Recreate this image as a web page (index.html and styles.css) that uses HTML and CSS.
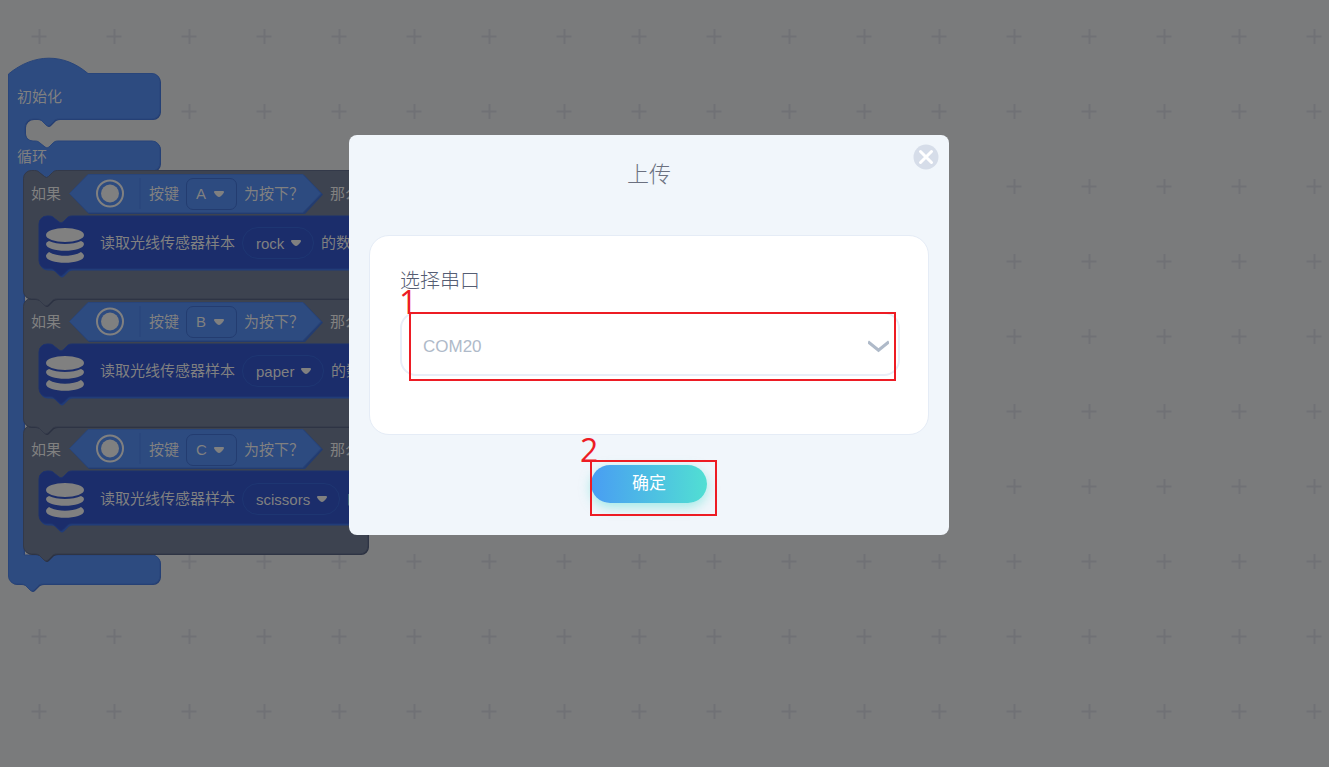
FILE: index.html
```html
<!DOCTYPE html>
<html lang="zh-CN">
<head>
<meta charset="utf-8">
<title>上传</title>
<link rel="stylesheet" href="styles.css">
</head>
<body>
<main class="workspace">
  <svg class="canvas" aria-hidden="true">
    <defs>
      <pattern id="grid" x="2" y="-1" width="75" height="75" patternUnits="userSpaceOnUse">
        <path d="M29.500 37.500h15M37.500 30v15" stroke="#707175" stroke-width="2" fill="none"/>
      </pattern>
      <path id="loop" d="M8.500 74C34 53 64 53 88 73.500H152a8 8 0 0 1 8 8V111a8 8 0 0 1-8 8H59c-3 0-4 1-5 2l-4 4q-2 2-4 0l-4-4c-1-1-2-2-5-2h-4a8 8 0 0 0-8 8v6a8 8 0 0 0 8 8h2c3 0 4 1 5 2l5 4q2 2 4 0l4-4c1-1 2-2 5-2H152a8 8 0 0 1 8 8V163a8 8 0 0 1-8 8H60l-8 10H40l-8-4H24V555H152a8 8 0 0 1 8 8v13a8 8 0 0 1-8 8H43c-3 0-4 1-5 2l-4 4q-2 2-4 0l-4-4c-1-1-2-2-5-2h-4.500a8 8 0 0 1-8-8z"/>
      <path id="branch" d="M23.500 178.500a8 8 0 0 1 8-8h3c3 0 4 1 5 2l5 4q2 2 4 0l4-4c1-1 2-2 5-2H360a8 8 0 0 1 8 8V291a8 8 0 0 1-8 8H57c-3 0-4 1-5 2l-4 4q-2 2-4 0l-4-4c-1-1-2-2-5-2h-3.500a8 8 0 0 1-8-8z"/>
      <path id="store" d="M39 224a8 8 0 0 1 8-8h2c3 0 4 1 5 2l5 4q2 2 4 0l4-4c1-1 2-2 5-2H368V268.500H72c-3 0-4 1-5 2l-4 4q-2 2-4 0l-4-4c-1-1-2-2-5-2h-3a8 8 0 0 1-8-8z"/>
      <g id="group">
        <use href="#branch" x="1" y="1" class="branch-edge"/>
        <use href="#branch" class="branch"/>
        <path class="loop-edge" d="M70 194l19-19H304l19 19.500L305 214H89z"/>
        <path class="loop" d="M69.500 193.500L88 174.500H303L321 193.500L303 212.500H88z"/>
        <circle cx="110" cy="193.500" r="13" fill="none" stroke="#808080" stroke-width="2"/>
        <circle cx="110" cy="193.500" r="9" fill="#808080"/>
        <path d="M140 178v31" stroke="#29457a"/>
        <use href="#store" x="1" y="2" class="store-edge"/>
        <use href="#store" class="store"/>
        <g fill="#808080">
          <ellipse cx="65" cy="235" rx="19" ry="7"/>
          <path d="M46 244q0-2 3-3c8 4 24 4 32 0q3 1 3 3c0 9-38 9-38 0z"/>
          <path d="M46 256q0-2 3-4c8 5 24 5 32 0q3 2 3 4c0 9-38 9-38 0z"/>
        </g>
      </g>
    </defs>
    <rect width="100%" height="100%" fill="url(#grid)"/>
    <use href="#loop" x="1" y="1" class="loop-edge"/>
    <use href="#loop" class="loop"/>
    <use href="#group" y="255"/>
    <use href="#group" y="128"/>
    <use href="#group"/>
  </svg>

  <section class="script">
    <p class="stage stage-init">初始化</p>
    <p class="stage stage-loop">循环</p>
    <div class="group">
      <div class="row cond">
        <span class="if">如果</span>
        <label for="key1">按键</label>
        <span class="pick"><select id="key1"><option>A</option></select><svg viewBox="0 0 10 6"><path d="M1 0h8q1 0 1 1 0 1-3 4-2 2-4 0Q0 2 0 1 0 0 1 0z"/></svg></span>
        <span class="pressed">为按下<span class="query">？</span></span><span>那么</span>
      </div>
      <div class="row read">
        <label for="set1">读取光线传感器样本</label>
        <span class="pick round"><select id="set1"><option>rock</option></select><svg viewBox="0 0 10 6"><path d="M1 0h8q1 0 1 1 0 1-3 4-2 2-4 0Q0 2 0 1 0 0 1 0z"/></svg></span>
        <span>的数</span>
      </div>
    </div>
    <div class="group">
      <div class="row cond">
        <span class="if">如果</span>
        <label for="key2">按键</label>
        <span class="pick"><select id="key2"><option>B</option></select><svg viewBox="0 0 10 6"><path d="M1 0h8q1 0 1 1 0 1-3 4-2 2-4 0Q0 2 0 1 0 0 1 0z"/></svg></span>
        <span class="pressed">为按下<span class="query">？</span></span><span>那么</span>
      </div>
      <div class="row read">
        <label for="set2">读取光线传感器样本</label>
        <span class="pick round"><select id="set2"><option>paper</option></select><svg viewBox="0 0 10 6"><path d="M1 0h8q1 0 1 1 0 1-3 4-2 2-4 0Q0 2 0 1 0 0 1 0z"/></svg></span>
        <span>的数</span>
      </div>
    </div>
    <div class="group">
      <div class="row cond">
        <span class="if">如果</span>
        <label for="key3">按键</label>
        <span class="pick"><select id="key3"><option>C</option></select><svg viewBox="0 0 10 6"><path d="M1 0h8q1 0 1 1 0 1-3 4-2 2-4 0Q0 2 0 1 0 0 1 0z"/></svg></span>
        <span class="pressed">为按下<span class="query">？</span></span><span>那么</span>
      </div>
      <div class="row read">
        <label for="set3">读取光线传感器样本</label>
        <span class="pick round"><select id="set3"><option>scissors</option></select><svg viewBox="0 0 10 6"><path d="M1 0h8q1 0 1 1 0 1-3 4-2 2-4 0Q0 2 0 1 0 0 1 0z"/></svg></span>
        <span>的</span>
      </div>
    </div>
  </section>
</main>

<div class="overlay">
  <div class="dialog" role="dialog" aria-labelledby="title">
    <h1 class="title" id="title">上传</h1>
    <button class="close" type="button" aria-label="关闭">
      <svg viewBox="0 0 26 26"><circle cx="13" cy="13" r="12.500" fill="#d6dde9"/><path d="M7.500 7.500l11 11M18.500 7.500l-11 11" stroke="#fff" stroke-width="3" stroke-linecap="round"/></svg>
    </button>
    <div class="card">
      <label class="port-label" for="port">选择串口</label>
      <div class="port">
        <select id="port"><option>COM20</option></select>
        <svg viewBox="0 0 20 12"><path d="M0 1.500l10 8 10-8" fill="none" stroke="#afbac9" stroke-width="3"/></svg>
      </div>
    </div>
    <button class="confirm" type="button">确定</button>
    <div class="mark mark-port"><span>1</span></div>
    <div class="mark mark-confirm"><span>2</span></div>
  </div>
</div>
</body>
</html>
```
FILE: styles.css
```css
* { box-sizing: border-box; }

body {
  margin: 0;
  min-height: 100vh;
  background: #7a7b7c;
  font-family: "Liberation Sans", "Noto Sans CJK SC", sans-serif;
}

button, select { font-family: inherit; margin: 0; }

select {
  appearance: none;
  background: none;
  border: 0;
  outline: 0;
}

.workspace {
  position: relative;
  height: 100vh;
  overflow: hidden;
  color: #808080;
  font-size: 15px;
  line-height: 24px;
}

.canvas {
  position: absolute;
  inset: 0;
  width: 100%;
  height: 100%;
}

.loop { fill: #2d4b80; stroke: #29457a; }
.loop-edge { fill: #233c70; }
.branch { fill: #3d4350; stroke: #333949; }
.branch-edge { fill: #2b3141; }
.store { fill: #1b2d6b; stroke: #1d326f; }
.store-edge { fill: #213c78; }

/* The program sits on the free canvas, its rows stack from the top */
.script {
  position: absolute;
  left: 8px;
  top: 57px;
  white-space: nowrap;
}

.stage { margin: 0; padding-left: 9px; }
.stage-init { padding-top: 28px; height: 88px; }
.stage-loop { height: 25px; }

.group { height: 128px; }

.row {
  display: flex;
  align-items: center;
  gap: 7px;
}

.cond { height: 47px; padding-left: 23px; }
.read { height: 52px; padding-left: 92px; }
.if { width: 111px; }
.pressed { width: 79px; }
.query { font-family: "Noto Sans CJK JP", sans-serif; }

.pick {
  display: grid;
  align-items: center;
  border: 1px solid #233c70;
  border-radius: 7px;
}

.pick select {
  grid-area: 1 / 1;
  height: 30px;
  padding: 0 29px 0 9px;
  font-size: 15px;
  color: #808080;
}

.pick svg {
  grid-area: 1 / 1;
  justify-self: end;
  width: 10px;
  height: 6px;
  margin-right: 12px;
  fill: #808080;
  pointer-events: none;
}

.pick.round { border-color: #1e3672; border-radius: 16px; }
.pick.round select { padding: 0 28px 0 13px; }

.overlay {
  position: fixed;
  inset: 0;
  display: flex;
  align-items: center;
  justify-content: center;
  padding: 0 31px 97px 0;
}

.dialog {
  position: relative;
  display: flex;
  flex-direction: column;
  align-items: center;
  width: 600px;
  padding: 20px 20px 32px;
  border-radius: 8px;
  background: #f1f6fb;
}

.title {
  margin: 0 0 46px;
  font-size: 22px;
  line-height: 34px;
  font-weight: 300;
  font-family: "Noto Sans CJK SC", sans-serif;
  color: #6b7080;
}

.close {
  position: absolute;
  top: 9px;
  right: 10px;
  width: 26px;
  height: 26px;
  padding: 0;
  border: 0;
  background: none;
}

.close svg { display: block; }

.card {
  width: 100%;
  padding: 29px 28px 58px 30px;
  border: 1px solid #e5ecf6;
  border-radius: 20px;
  background: #fff;
}

.port-label {
  display: block;
  margin-bottom: 17px;
  font-size: 20px;
  line-height: 30px;
  font-weight: 300;
  font-family: "Noto Sans CJK SC", sans-serif;
  color: #555d73;
}

.port {
  display: grid;
  align-items: center;
  border: 2px solid #e8eef8;
  border-radius: 16px;
}

.port select {
  grid-area: 1 / 1;
  height: 60px;
  padding: 4px 40px 0 21px;
  font-size: 17px;
  color: #afbac9;
}

.port svg {
  grid-area: 1 / 1;
  justify-self: end;
  width: 21px;
  height: 13px;
  margin: 4px 9px 0 0;
  pointer-events: none;
}

.confirm {
  width: 116px;
  height: 38px;
  margin-top: 30px;
  padding: 0 0 6px;
  border: 0;
  border-radius: 19px;
  background: linear-gradient(90deg, #499df3, #51dfd3);
  box-shadow: 0 4px 12px rgba(81, 223, 211, .5);
  color: #fff;
  font-size: 17px;
}

/* Numbered step frames laid over the controls */
.mark {
  position: absolute;
  border: 2px solid #ed1c24;
  color: #ed1c24;
  font: 32px/30px "Open Sans", sans-serif;
  pointer-events: none;
}

.mark span { position: absolute; }
.mark-port { left: 60px; top: 177px; width: 487px; height: 69px; }
.mark-port span { left: -12px; top: -27px; }
.mark-confirm { left: 241px; top: 325px; width: 127px; height: 56px; }
.mark-confirm span { left: -12px; top: -27px; }
```
